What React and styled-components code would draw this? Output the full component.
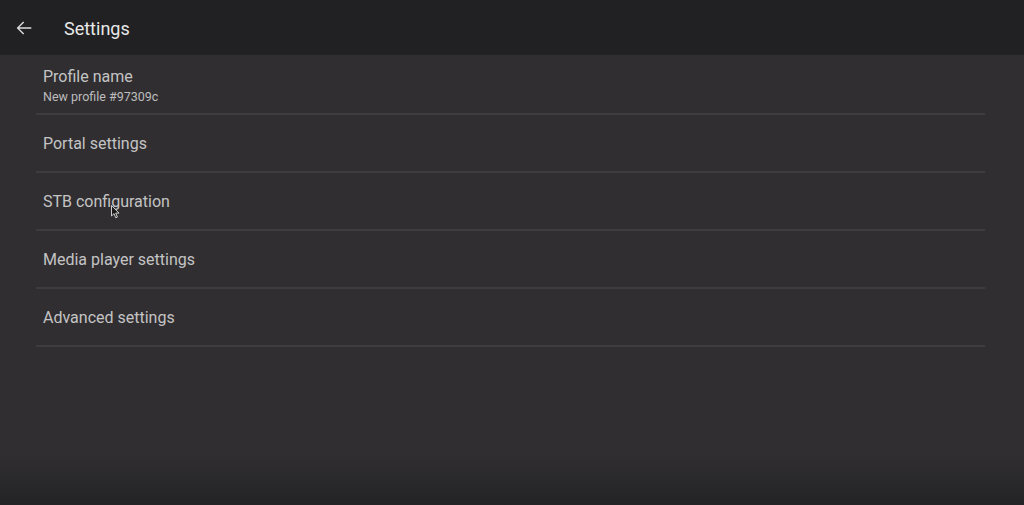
import React from "react";
import styled, { createGlobalStyle } from "styled-components";

const Global = createGlobalStyle`
  html, body {
    margin: 0;
    padding: 0;
    height: 100%;
  }
  body {
    font-family: Roboto, "Noto Sans", sans-serif;
    background: #302e31;
  }
  #root {
    height: 100%;
  }
`;

const Screen = styled.div`
  position: relative;
  height: 505px;
  display: flex;
  flex-direction: column;
  background: linear-gradient(to bottom, #302e31 0%, #302e31 90%, #232325 100%);
  overflow: hidden;
`;

const Toolbar = styled.header`
  box-sizing: border-box;
  height: 55px;
  flex: none;
  display: flex;
  align-items: center;
  padding-left: 13px;
  gap: 29px;
  background: #212123;
`;

const BackButton = styled.button`
  display: flex;
  align-items: center;
  justify-content: center;
  padding: 0;
  border: 0;
  background: none;
  color: #dcdcdc;
  cursor: pointer;
`;

const Title = styled.h1`
  margin: 0;
  font-size: 18px;
  font-weight: 400;
  color: #e8e8e8;
  transform: translateY(1px);
`;

const List = styled.ul`
  list-style: none;
  margin: 0 39px 0 36px;
  padding: 2px 0 0;
`;

const Row = styled.li`
  box-sizing: border-box;
  height: 58px;
  display: flex;
  flex-direction: column;
  justify-content: center;
  gap: 3px;
  padding: 0 7px;
  border-bottom: 2px solid #3e3c40;
  cursor: pointer;
`;

const Label = styled.div`
  font-size: 16px;
  line-height: 19px;
  color: #c4c4c4;
`;

const Sub = styled.div`
  font-size: 12.5px;
  line-height: 15px;
  color: #bdbdbd;
`;

const Pointer = styled.svg`
  position: absolute;
  left: 111px;
  top: 205px;
  pointer-events: none;
`;

const items = [
  { label: "Profile name", sub: "New profile #97309c" },
  { label: "Portal settings" },
  { label: "STB configuration" },
  { label: "Media player settings" },
  { label: "Advanced settings" },
];

export default function App() {
  return (
    <>
      <Global />
      <Screen>
        <Toolbar>
          <BackButton aria-label="Back">
            <svg width="22" height="22" viewBox="0 0 24 24" fill="currentColor">
              <path d="M20 11.2H6.9l5.3-5.3L11.1 4.8 4 12l7.1 7.2 1.1-1.1-5.3-5.3H20z" />
            </svg>
          </BackButton>
          <Title>Settings</Title>
        </Toolbar>
        <List>
          {items.map((it) => (
            <Row key={it.label}>
              <Label>{it.label}</Label>
              {it.sub && <Sub>{it.sub}</Sub>}
            </Row>
          ))}
        </List>
        <Pointer width="9" height="14" viewBox="0 0 9 14">
          <path d="M0.5 0.5 L0.5 11 L3 8.6 L4.8 12.8 L6.4 12.1 L4.7 8.1 L8 8.1 Z" fill="#1a1a1a" stroke="#e0e0e0" strokeWidth="0.9" />
        </Pointer>
      </Screen>
    </>
  );
}
